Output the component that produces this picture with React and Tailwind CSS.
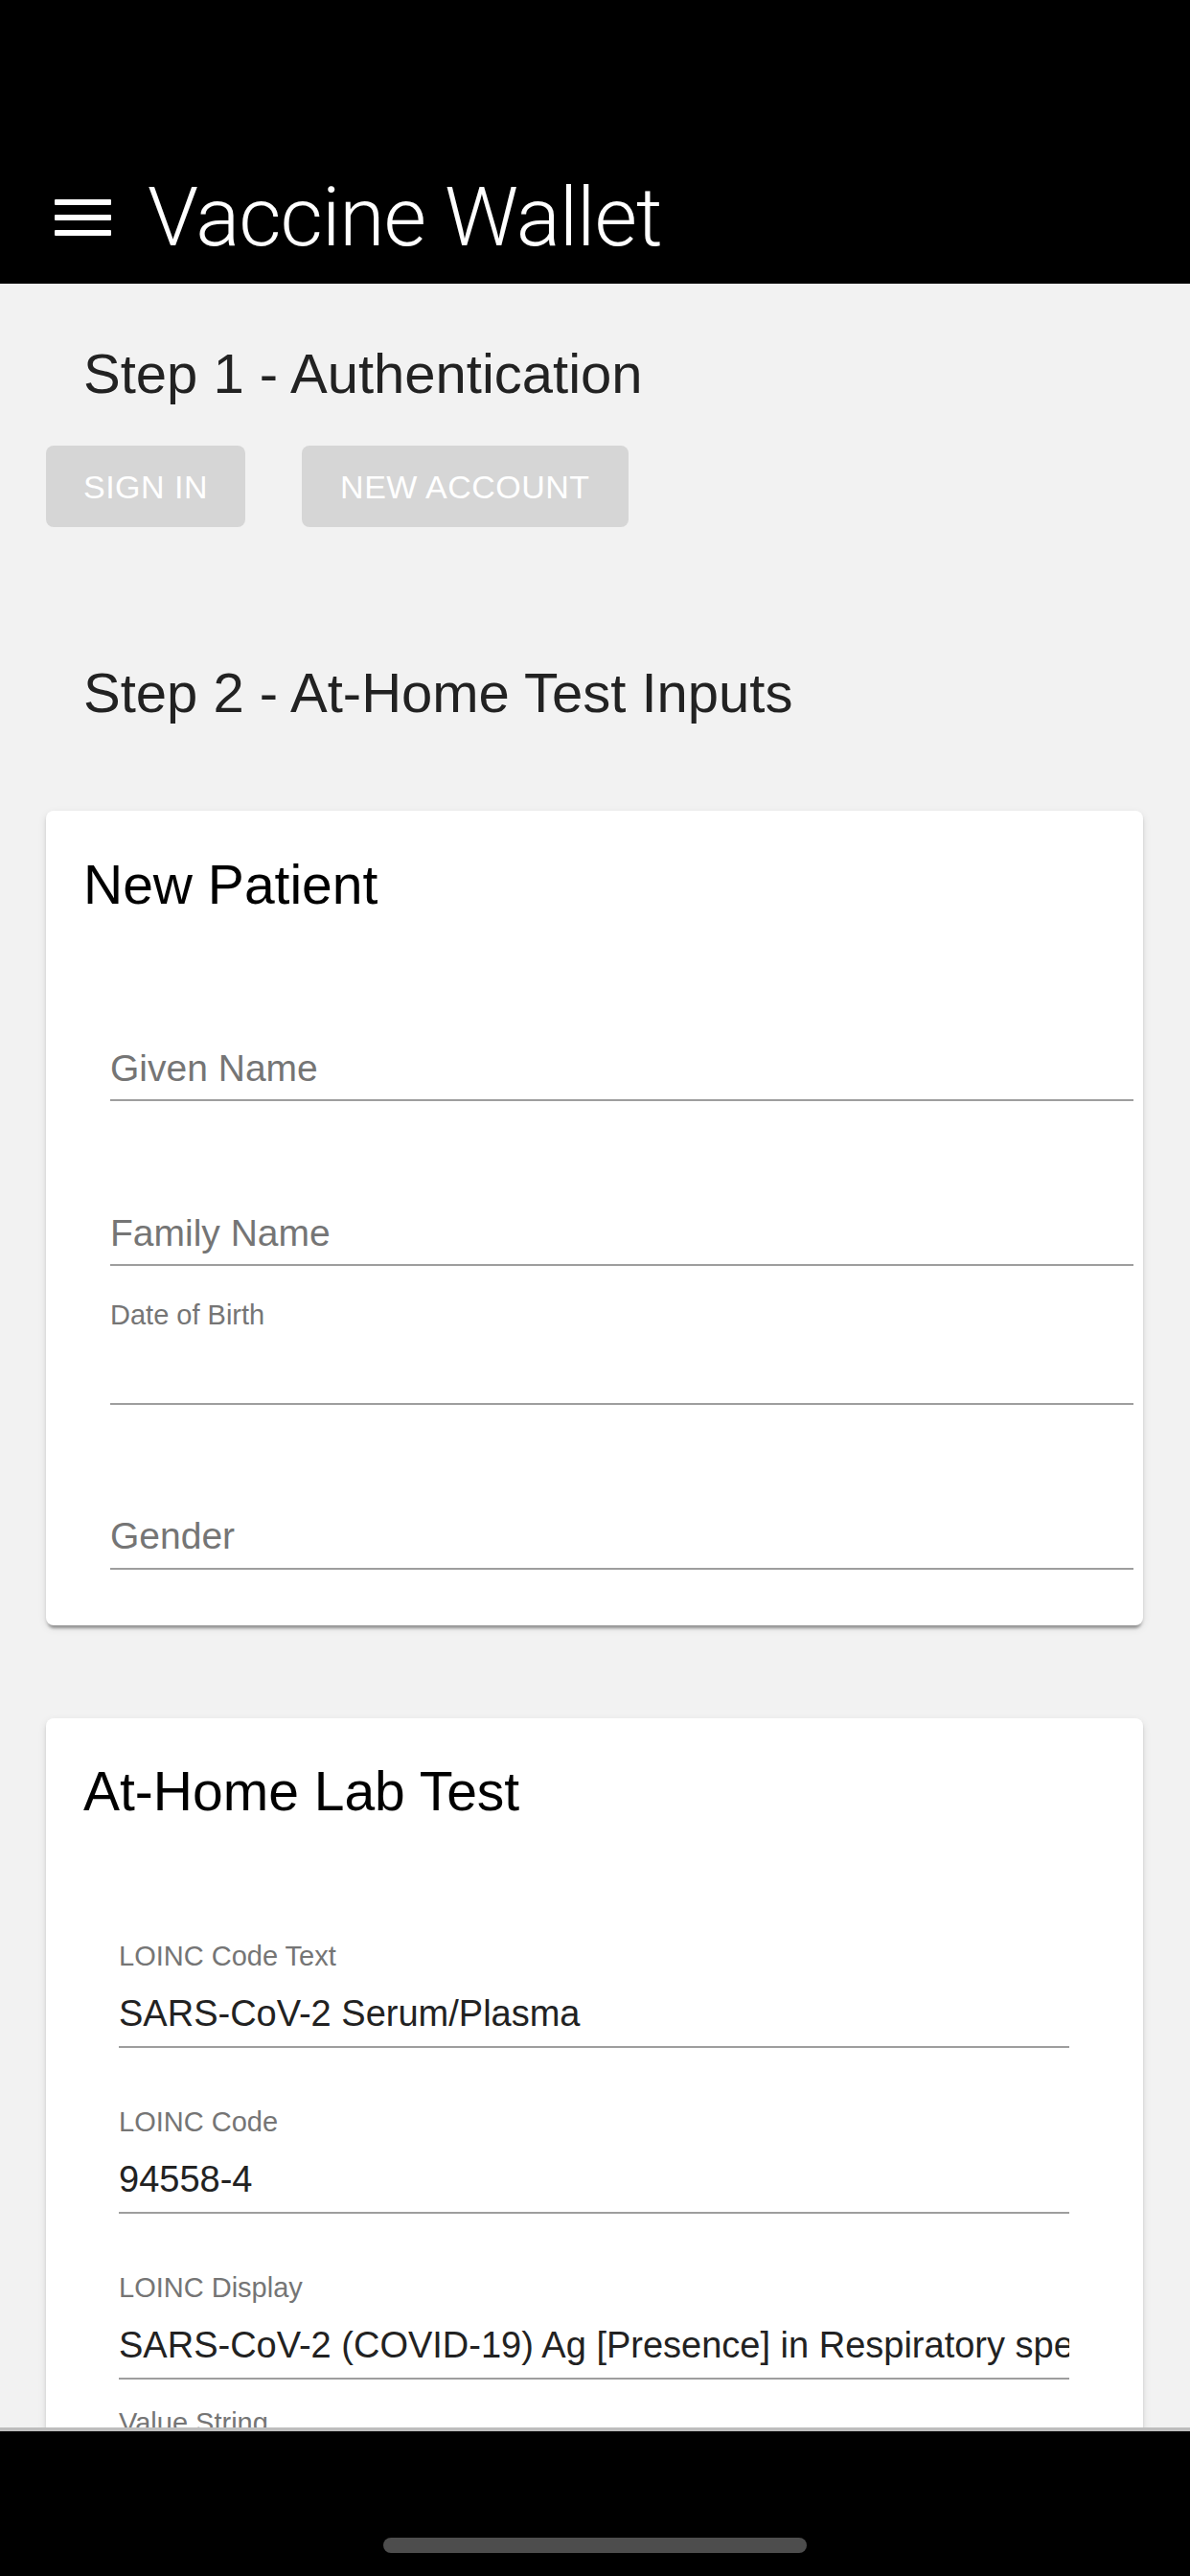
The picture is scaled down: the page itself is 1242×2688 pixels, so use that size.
// App.jsx
const sans = "font-['Liberation_Sans',Arial,sans-serif]";

function Field({ label, className }) {
    return (
        <div className={`border-b-2 border-[#9e9e9e] pb-[9px] ${className}`}>
            <span className="block text-[39px] leading-[46px] text-[#757575]">{label}</span>
        </div>
    );
}

function FilledField({ label, value, className }) {
    return (
        <div className={className}>
            <div className="text-[29px] leading-[34px] text-[#757575]">{label}</div>
            <div className="mt-[20px] border-b-2 border-[#9e9e9e] pb-[11px]">
                <div className="overflow-hidden whitespace-nowrap text-[38px] leading-[46px] text-[#222]">{value}</div>
            </div>
        </div>
    );
}

export default function App() {
    return (
        <div className={`flex h-[2688px] w-[1242px] flex-col overflow-hidden bg-[#f2f2f2] ${sans}`}>
            <header className="h-[296px] shrink-0 bg-black">
                <div className="flex items-center pt-[179px]">
                    <div className="ml-[57px] flex w-[59px] flex-col gap-[10px]">
                        <span className="h-[6px] rounded-[1px] bg-white" />
                        <span className="h-[6px] rounded-[1px] bg-white" />
                        <span className="h-[6px] rounded-[1px] bg-white" />
                    </div>
                    <h1 className="ml-[38px] font-['Roboto',sans-serif] text-[86px] font-light leading-[96px] tracking-[-1px] text-white">
                        Vaccine Wallet
                    </h1>
                </div>
            </header>

            <main className="min-h-0 flex-1 overflow-hidden">
                <h2 className="ml-[87px] mt-[60px] text-[58px] leading-[68px] text-[#222]">Step 1 - Authentication</h2>
                <div className="ml-[48px] mt-[41px] flex gap-[59px]">
                    <button className="flex h-[85px] items-center rounded-[8px] bg-[#d6d6d6] px-[39px] text-[34px] leading-[40px] tracking-[0.5px] text-white uppercase">
                        Sign In
                    </button>
                    <button className="flex h-[85px] items-center rounded-[8px] bg-[#d6d6d6] px-[40px] text-[34px] leading-[40px] tracking-[0.5px] text-white uppercase">
                        New Account
                    </button>
                </div>

                <h2 className="ml-[87px] mt-[139px] text-[58px] leading-[68px] text-[#222]">Step 2 - At-Home Test Inputs</h2>

                <section className="ml-[48px] mr-[49px] mt-[89px] rounded-[8px] bg-white pb-[58px] pl-[39px] pr-[10px] pt-[43px] shadow-[0_6px_3px_-3px_rgba(0,0,0,0.25),0_3px_3px_0_rgba(0,0,0,0.12),0_3px_9px_0_rgba(0,0,0,0.1)]">
                    <h3 className="text-[57px] leading-[68px] text-black">New Patient</h3>
                    <div className="ml-[28px]">
                        <Field label="Given Name" className="mt-[135px]" />
                        <Field label="Family Name" className="mt-[115px]" />
                        <div className="mt-[34px]">
                            <div className="text-[29px] leading-[34px] text-[#757575]">Date of Birth</div>
                            <div className="h-[77px] border-b-2 border-[#9e9e9e]" />
                        </div>
                        <Field label="Gender" className="mt-[114px] pb-[10px]" />
                    </div>
                </section>

                <section className="ml-[48px] mr-[49px] mt-[97px] rounded-[8px] bg-white px-[39px] pb-[60px] pt-[42px] shadow-[0_6px_3px_-3px_rgba(0,0,0,0.25),0_3px_3px_0_rgba(0,0,0,0.12),0_3px_9px_0_rgba(0,0,0,0.1)]">
                    <h3 className="text-[57px] leading-[68px] text-black">At-Home Lab Test</h3>
                    <div className="ml-[37px] mr-[38px]">
                        <FilledField label="LOINC Code Text" value="SARS-CoV-2 Serum/Plasma" className="mt-[121px]" />
                        <FilledField label="LOINC Code" value="94558-4" className="mt-[60px]" />
                        <FilledField
                            label="LOINC Display"
                            value="SARS-CoV-2 (COVID-19) Ag [Presence] in Respiratory specimen by Rapid immunoassay"
                            className="mt-[60px]"
                        />
                        <FilledField label="Value String" value="" className="mt-[28px]" />
                    </div>
                </section>
            </main>

            <footer className="flex h-[155px] shrink-0 justify-center border-t-4 border-[#bdbdbd] bg-black pt-[111px]">
                <span className="h-[16px] w-[442px] rounded-full bg-[#4d4d4d]" />
            </footer>
        </div>
    );
}
